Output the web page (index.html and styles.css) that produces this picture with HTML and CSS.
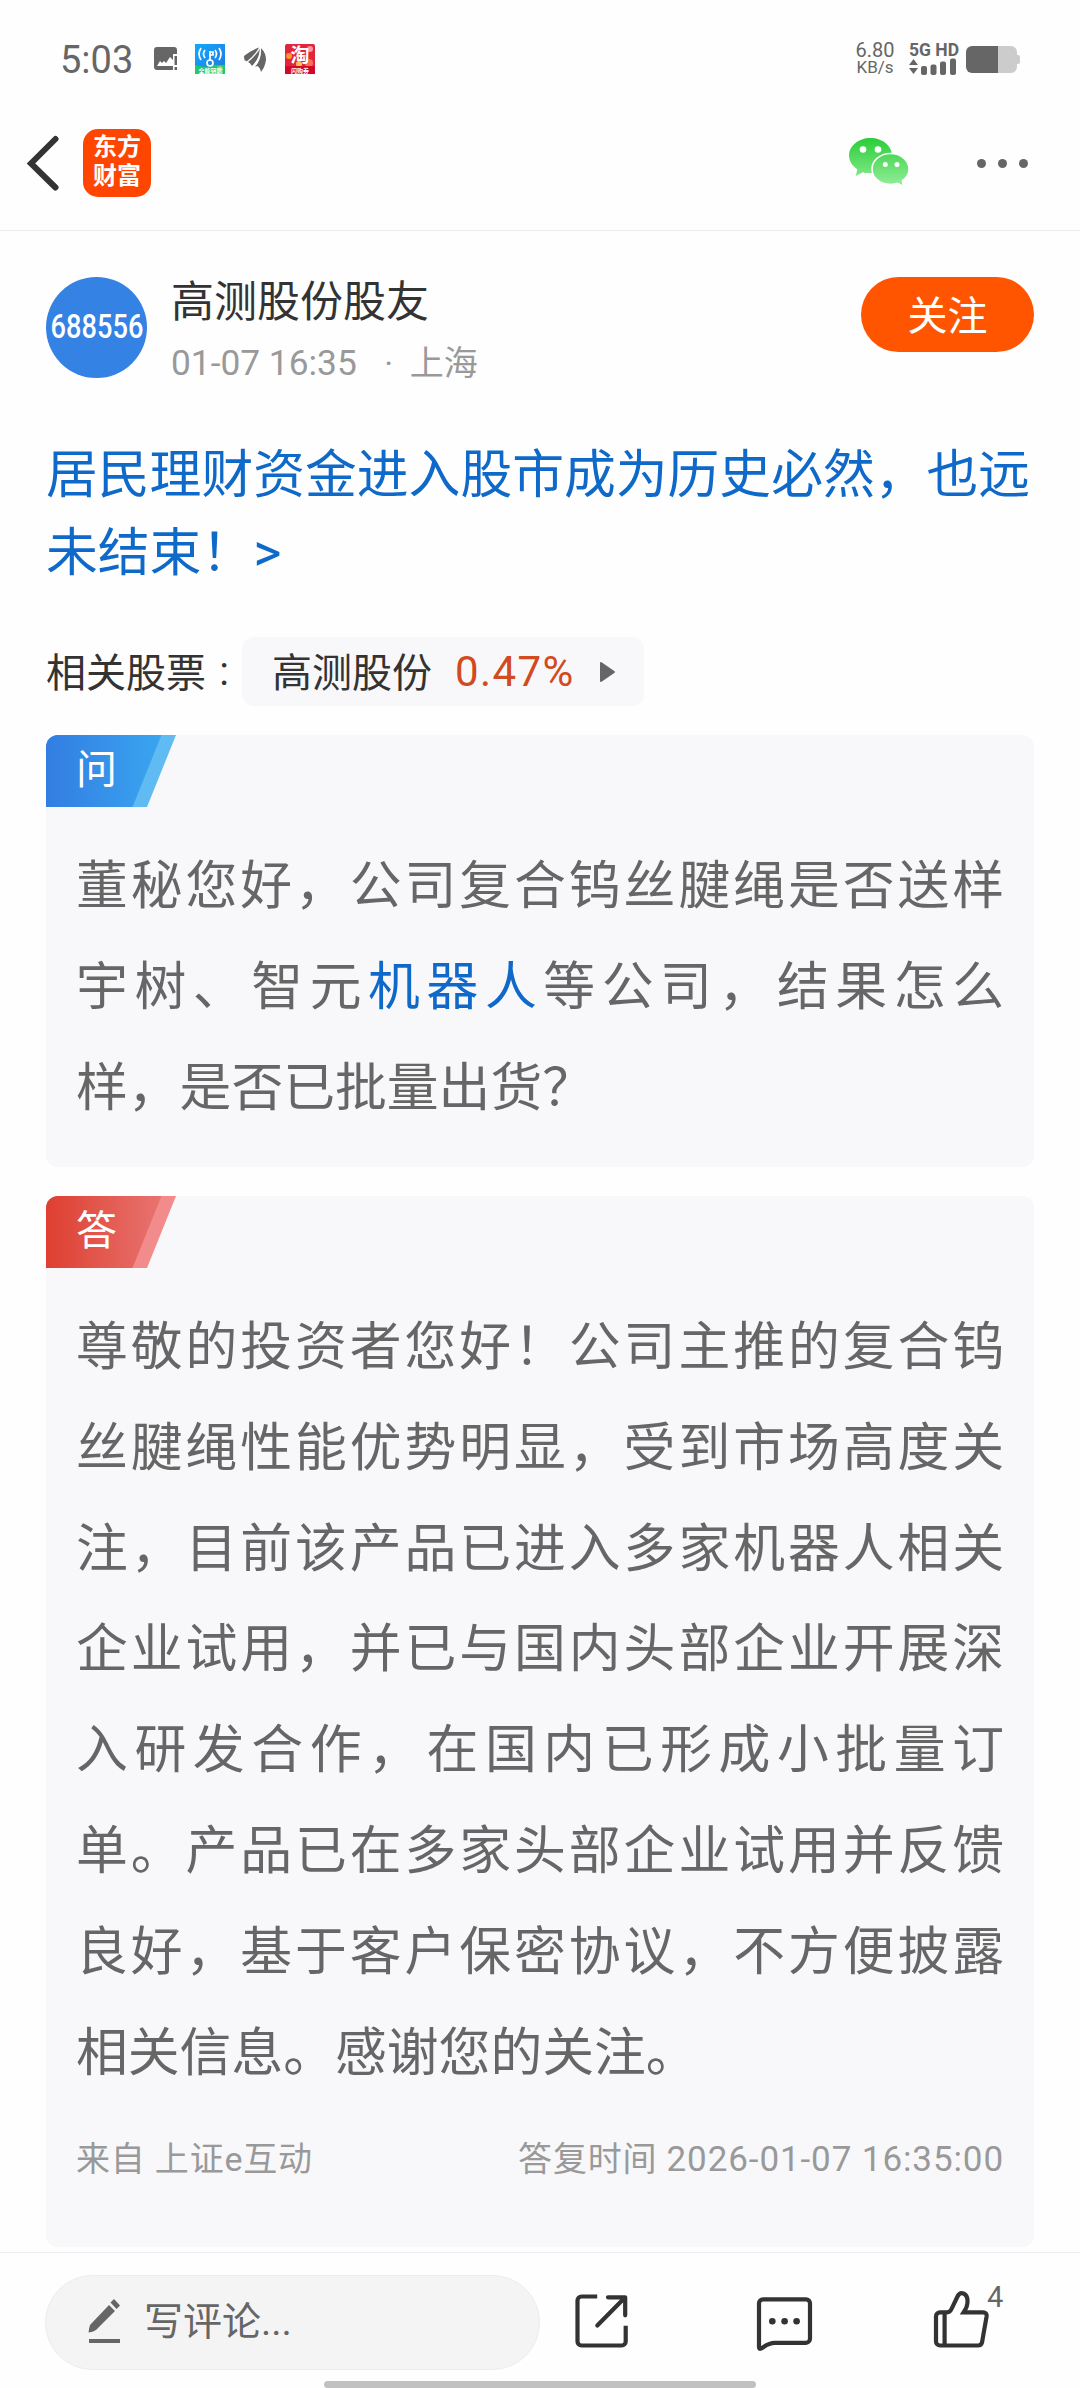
FILE: index.html
```html
<!DOCTYPE html>
<html lang="zh-CN">
<head>
  <meta charset="UTF-8" />
  <title>高测股份股友</title>
  <meta name="viewport" content="width=device-width, initial-scale=1.0" />
  <link rel="stylesheet" href="styles.css">
</head>
<body>

  <!-- 状态栏 -->
  <div class="status-bar">
    <span class="clock">5:03</span>
    <svg class="st-photo" width="24" height="24" viewBox="0 0 24 24">
      <path fill="#666" fill-rule="evenodd" d="M3 0h17a3 3 0 0 1 3 3v4h-4v16H3a3 3 0 0 1-3-3V3a3 3 0 0 1 3-3zM3 19h16v-6l-3-3-4 6-2-2-2 2-2-2z"/>
      <path fill="#666" d="M20.5 9H23v9h-2.500zM20.500 20H23v3h-2.500z"/>
    </svg>
    <svg class="st-wifi" width="30" height="30" viewBox="0 0 30 30">
      <defs>
        <linearGradient id="wifiBg" x1="0" y1="0" x2="1" y2="1">
          <stop offset="0" stop-color="#0fa9fb"/><stop offset="1" stop-color="#2475e2"/>
        </linearGradient>
      </defs>
      <rect width="30" height="30" fill="url(#wifiBg)"/>
      <path d="M0 21q8 3 15 1t15-1v9H0z" fill="#20c96b"/>
      <circle cx="25" cy="25" r="3" fill="#8fdc74"/>
      <g fill="none" stroke="#fff" stroke-width="1.700">
        <path d="M6 4q-4 6 0 12M10 6q-3 4 0 8M24 4q4 6 0 12M20 6q3 4 0 8"/>
        <path d="M15 7v10M15 8h3v3h-3"/>
        <circle cx="15" cy="19" r="3"/>
      </g>
      <text x="15.500" y="29" class="tiny-text">全能钥匙</text>
    </svg>
    <svg class="st-leaf" width="23" height="25" viewBox="0 0 23 25">
      <path fill="#666" d="M0 9Q6 4 15 1Q9 7 1 14Q0 12 0 9zM5 15Q13 9 16 1Q17 10 8 19zM11 20Q18 12 17 1Q22 6 22 13Q21 20 17 25Q16 20 13 19z"/>
      <path fill="#666" d="M1 9Q8 3 15 .5Q14 9 8 17L2 14z"/>
      <path stroke="#fefefe" stroke-width="1.200" fill="none" d="M3 15Q11 9 15.500 1M9 20Q16 12 16.500 1"/>
    </svg>
    <svg class="st-shop" width="30" height="30" viewBox="0 0 30 30">
      <rect width="30" height="30" rx="2" fill="#e0263c"/>
      <circle cx="4" cy="12" r="3" fill="#ff962e"/><circle cx="25" cy="5" r="3" fill="#ff91a8"/>
      <circle cx="24" cy="19" r="4" fill="#f87052"/><circle cx="14" cy="20" r="3" fill="#ffbf56"/>
      <rect y="22" width="30" height="8" fill="#d3062c"/>
      <text x="15" y="18" class="shop-text">淘</text>
      <text x="15" y="28.500" class="tiny-text">闪购券</text>
    </svg>
    <div class="net-speed"><span>6.80</span><small>KB/s</small></div>
    <div class="signal">
      <b>5G HD</b>
      <svg width="48" height="18" viewBox="0 0 48 18" fill="#666">
        <path d="M4.500 1l4.500 6H0zM0 10h9l-4.500 6z"/>
        <rect x="12" y="8" width="6" height="9" rx="2"/>
        <rect x="21.500" y="6.500" width="6" height="10.500" rx="2"/>
        <rect x="31" y="3.500" width="6" height="13.500" rx="2"/>
        <rect x="41" y="0.500" width="6" height="16.500" rx="2"/>
      </svg>
    </div>
    <svg class="battery" width="54" height="27" viewBox="0 0 54 27">
      <path fill="#ccc" d="M32 0h13a6 6 0 0 1 6 6v3h1a2 2 0 0 1 2 2v5a2 2 0 0 1-2 2h-1v3a6 6 0 0 1-6 6H32z"/>
      <path fill="#666" d="M6 0h26v27H6a6 6 0 0 1-6-6V6a6 6 0 0 1 6-6z"/>
    </svg>
  </div>

  <!-- 导航栏 -->
  <div class="nav-bar">
    <svg class="back" width="34" height="60" viewBox="0 0 34 60">
      <path d="M30.500 6L6 30.500l24.500 24" fill="none" stroke="#333" stroke-width="6" stroke-linecap="round"/>
    </svg>
    <div class="app-logo">东方<br>财富</div>
    <svg class="wechat" width="64" height="54" viewBox="0 0 64 54">
      <defs>
        <linearGradient id="wxBg" gradientUnits="userSpaceOnUse" x1="0" y1="2" x2="0" y2="50">
          <stop offset="0" stop-color="#2bcd38"/><stop offset="1" stop-color="#93ee98"/>
        </linearGradient>
      </defs>
      <path fill="url(#wxBg)" d="M23.500 2C11.500 2 2 10 2 19.500c0 5.500 3.500 10.500 8.300 13.700L8.800 40l7-3.700c3 .9 5 .9 7.700.7C35 37 45 29 45 19.500S35.500 2 23.500 2z"/>
      <path fill="url(#wxBg)" stroke="#fff" stroke-width="1.500" d="M43.500 17.500c-10.500 0-18.500 7-18.500 15.500s8 15.500 18.500 15.500c3 0 5-.4 7.200-1.200L56.500 50.500l-1.200-5.800C59.500 42 62 37.500 62 33c0-8.500-8-15.500-18.500-15.500z"/>
      <g fill="#fff">
        <circle cx="16" cy="13.500" r="3.300"/><circle cx="31" cy="13.500" r="3.300"/>
        <circle cx="38.300" cy="28.500" r="2.500"/><circle cx="50" cy="28.500" r="2.500"/>
      </g>
    </svg>
    <div class="more"><i></i><i></i><i></i></div>
  </div>

  <!-- 正文 -->
  <div class="post">
    <div class="author">
      <div class="avatar"><span>688556</span></div>
      <div class="author-info">
        <div class="name">高测股份股友</div>
        <div class="meta"><span class="date">01-07 16:35</span><span class="dot">·</span><span>上海</span></div>
      </div>
      <button class="follow">关注</button>
    </div>

    <div class="topic">居民理财资金进入股市成为历史必然，也远未结束！<span class="arrow">&gt;</span></div>

    <div class="stock-row">
      <span class="stock-label">相关股票</span><span class="colon">:</span>
      <div class="stock-chip">
        <span class="stock-name">高测股份</span>
        <span class="rate">0.47%</span>
        <svg width="15" height="20" viewBox="0 0 15 20"><path d="M1 1v18L14 10z" fill="#666" stroke="#666" stroke-linejoin="round" stroke-width="2"/></svg>
      </div>
    </div>

    <div class="card question">
      <div class="tag tag-ask"><span>问</span></div>
      <p>董秘您好，公司复合钨丝腱绳是否送样宇树、智元<a>机器人</a>等公司，结果怎么样，是否已批量出货？</p>
    </div>

    <div class="card answer">
      <div class="tag tag-reply"><span>答</span></div>
      <p>尊敬的投资者您好！公司主推的复合钨丝腱绳性能优势明显，受到市场高度关注，目前该产品已进入多家机器人相关企业试用，并已与国内头部企业开展深入研发合作，在国内已形成小批量订单。产品已在多家头部企业试用并反馈良好，基于客户保密协议，不方便披露相关信息。感谢您的关注。</p>
      <div class="source">
        <span>来自 上证e互动</span>
        <span>答复时间 <span class="time">2026-01-07 16:35:00</span></span>
      </div>
    </div>
  </div>

  <!-- 底部操作栏 -->
  <div class="bottom-bar">
    <div class="comment-input">
      <svg width="34" height="46" viewBox="0 0 34 46" fill="#666">
        <path d="M21 7l6 6L8 32q-3 2-7.500 2.500Q1 30 2 27zM22.500 4.500L26 1l6 6.500-3.500 3.500zM1 41h31v4H1z"/>
      </svg>
      <span>写评论...</span>
    </div>
    <svg class="icon icon-share" width="60" height="64" viewBox="0 0 60 64">
      <path d="M25.200 5.500H9.500a4 4 0 0 0-4 4v41a4 4 0 0 0 4 4h40.200a4 4 0 0 0 4-4V34.700"/>
      <path stroke-linecap="round" stroke-linejoin="round" d="M36 6.300h17.200v18M25.300 34.500L53 6.500"/>
    </svg>
    <svg class="icon icon-comment" width="64" height="64" viewBox="0 0 64 64">
      <path stroke-linejoin="round" d="M11 8.300h43a4 4 0 0 1 4 4v35.500a4 4 0 0 1-4 4H23c-9 0-12 6-15 6q-1 0-1-2V12.300a4 4 0 0 1 4-4z"/>
      <g fill="#333" stroke="none"><circle cx="20.300" cy="30.300" r="3.300"/><circle cx="32.600" cy="30.300" r="3.300"/><circle cx="44.600" cy="30.300" r="3.300"/></g>
    </svg>
    <div class="like">
      <svg class="icon" width="64" height="64" viewBox="0 0 64 64">
        <path d="M12 26.300h7q3 0 4.500-3.300l6-12.500c3-6 9.500-3 10 3.500q.5 6-3.800 12.300H55q4 0 3.600 4L54 56.500q-.8 3-4 3H12a4 4 0 0 1-4-4V30.300a4 4 0 0 1 4-4zM16.600 26.300v33.200"/>
      </svg>
      <span class="like-count">4</span>
    </div>
    <div class="home-indicator"></div>
  </div>

</body>
</html>
```
FILE: styles.css
```css
* {
  box-sizing: border-box;
}

body {
  margin: 0;
  width: 1080px;
  height: 2388px;
  overflow: hidden;
  display: flex;
  flex-direction: column;
  background: #fefefe;
  font-family: Roboto, 'Noto Sans CJK SC', sans-serif;
  color: #333;
}

svg {
  display: block;
  flex-shrink: 0;
}

/* 状态栏 */
.status-bar {
  height: 96px;
  padding: 22px 60px 0 60px;
  display: flex;
  align-items: center;
  color: #666;
}

.clock {
  width: 93.5px;
  padding-top: 1px;
  font-size: 38px;
  line-height: 40px;
}

.st-wifi {
  margin-left: 17.5px;
}

.st-leaf {
  margin-left: 19px;
}

.st-shop {
  margin-left: 18px;
}

.tiny-text {
  font-size: 6px;
  font-weight: bold;
  fill: #fff;
  text-anchor: middle;
}

.shop-text {
  font-size: 19px;
  font-weight: bold;
  fill: #fff;
  text-anchor: middle;
}

.net-speed {
  width: 40px;
  margin-left: auto;
  text-align: center;
  font-size: 20px;
  line-height: 17px;
}

.net-speed span,
.net-speed small {
  display: block;
}

.net-speed small {
  font-size: 17px;
}

.signal {
  width: 48px;
  margin-left: 14px;
}

.signal b {
  display: block;
  font-size: 17.5px;
  line-height: 16px;
  white-space: nowrap;
}

.battery {
  margin-left: 9px;
}

/* 导航栏 */
.nav-bar {
  height: 135px;
  padding: 0 52px 0 25px;
  display: flex;
  align-items: center;
  border-bottom: 1px solid #ebebeb;
}

.app-logo {
  width: 68px;
  height: 68px;
  margin-left: 24px;
  padding-top: 4px;
  border-radius: 15px;
  background: #ff4600;
  color: #fff;
  font-size: 24px;
  font-weight: bold;
  line-height: 29px;
  text-align: center;
}

.wechat {
  margin-left: auto;
}

.more {
  width: 51px;
  margin-left: 66px;
  display: flex;
  justify-content: space-between;
}

.more i {
  width: 9px;
  height: 9px;
  border-radius: 50%;
  background: #666;
}

/* 正文 */
.post {
  flex: 1;
  padding: 46px 46px 0;
}

.author {
  height: 101px;
  display: flex;
  align-items: flex-start;
}

.avatar {
  width: 101px;
  height: 101px;
  border-radius: 50%;
  background: #3482e3;
  color: #fff;
  font-size: 34px;
  font-weight: 500;
  line-height: 99px;
  display: flex;
  justify-content: center;
}

.avatar span {
  transform: scaleX(0.8);
}

.author-info {
  margin-left: 24px;
}

.name {
  margin-top: 1px;
  font-size: 43px;
  line-height: 48px;
}

.meta {
  margin-top: 13px;
  display: flex;
  font-size: 34px;
  line-height: 48px;
  color: #999;
}

.date {
  font-size: 35.3px;
}

.dot {
  width: 53px;
  padding-left: 11px;
  text-align: center;
}

.follow {
  width: 173px;
  height: 75px;
  margin-left: auto;
  padding: 0 0 3px;
  border: none;
  border-radius: 38px;
  background: #ff5500;
  color: #fff;
  font-family: inherit;
  font-size: 40px;
}

.topic {
  margin-top: 59px;
  font-size: 51.8px;
  line-height: 77.5px;
  color: #0f69c9;
}

.arrow {
  font-size: 54px;
  line-height: 1;
}

.stock-row {
  height: 69px;
  margin-top: 45px;
  display: flex;
  align-items: center;
  font-size: 40px;
}

.stock-label,
.stock-name {
  padding-bottom: 4px;
}

.colon {
  width: 36px;
  text-align: center;
}

.stock-chip {
  width: 402px;
  height: 69px;
  padding: 0 29px 0 30px;
  border-radius: 12px;
  background: #f8f8fa;
  display: flex;
  align-items: center;
}

.rate {
  margin-left: 23px;
  margin-right: auto;
  font-size: 42px;
  letter-spacing: 1.4px;
  color: #d14a20;
}

.card {
  border-radius: 12px;
  background: #f8f8fa;
  overflow: hidden;
}

.card p {
  margin: 30px 0 0;
  padding: 0 30px;
  font-size: 51.8px;
  line-height: 100.8px;
  text-align: justify;
  color: #666;
}

.card a {
  color: #0f69c9;
}

.question {
  height: 432px;
  margin-top: 29px;
}

.answer {
  height: 1051px;
  margin-top: 29px;
}

.tag {
  width: 130px;
  height: 72px;
  clip-path: polygon(0 0, 100% 0, 101px 100%, 0 100%);
}

.tag span {
  display: block;
  height: 72px;
  padding-left: 30px;
  clip-path: polygon(0 0, 115.5px 0, 86.5px 100%, 0 100%);
  color: #fff;
  font-size: 41px;
  line-height: 71px;
}

.tag-ask {
  background: #5fbbf1;
}

.tag-ask span {
  background: linear-gradient(90deg, #327de2, #3aa5f0 115px);
}

.tag-reply {
  background: #f28b8b;
}

.tag-reply span {
  background: linear-gradient(90deg, #de3f30, #e87370 115px);
}

.source {
  margin-top: 30px;
  padding: 0 30px;
  display: flex;
  justify-content: space-between;
  font-size: 34px;
  line-height: 50px;
  letter-spacing: 0.8px;
  color: #999;
}

.time {
  font-size: 35px;
  letter-spacing: 0.9px;
}

/* 底部操作栏 */
.bottom-bar {
  position: relative;
  height: 136px;
  padding: 22px 0 0 45px;
  display: flex;
  align-items: flex-start;
  border-top: 1px solid #ebebeb;
  background: #fefefe;
}

.comment-input {
  width: 495px;
  height: 95px;
  padding-left: 42px;
  border: 1px solid #ececec;
  border-radius: 48px;
  background: #f4f4f4;
  display: flex;
  align-items: center;
  color: #666;
  font-size: 39px;
}

.comment-input svg {
  margin-bottom: 3px;
}

.comment-input span {
  margin-left: 22px;
  padding-bottom: 9px;
}

.icon {
  fill: none;
  stroke: #333;
  stroke-width: 4.2;
}

.icon-share {
  margin: 16px 0 0 32px;
}

.icon-comment {
  margin: 16px 0 0 120px;
}

.like {
  position: relative;
  margin: 11px 0 0 112px;
}

.like-count {
  position: absolute;
  left: 59px;
  top: -5px;
  font-size: 29px;
  line-height: 32px;
  color: #666;
}

.home-indicator {
  position: absolute;
  left: 324px;
  bottom: 0;
  width: 432px;
  height: 7px;
  border-radius: 4px;
  background: #c1c1c1;
}
```
